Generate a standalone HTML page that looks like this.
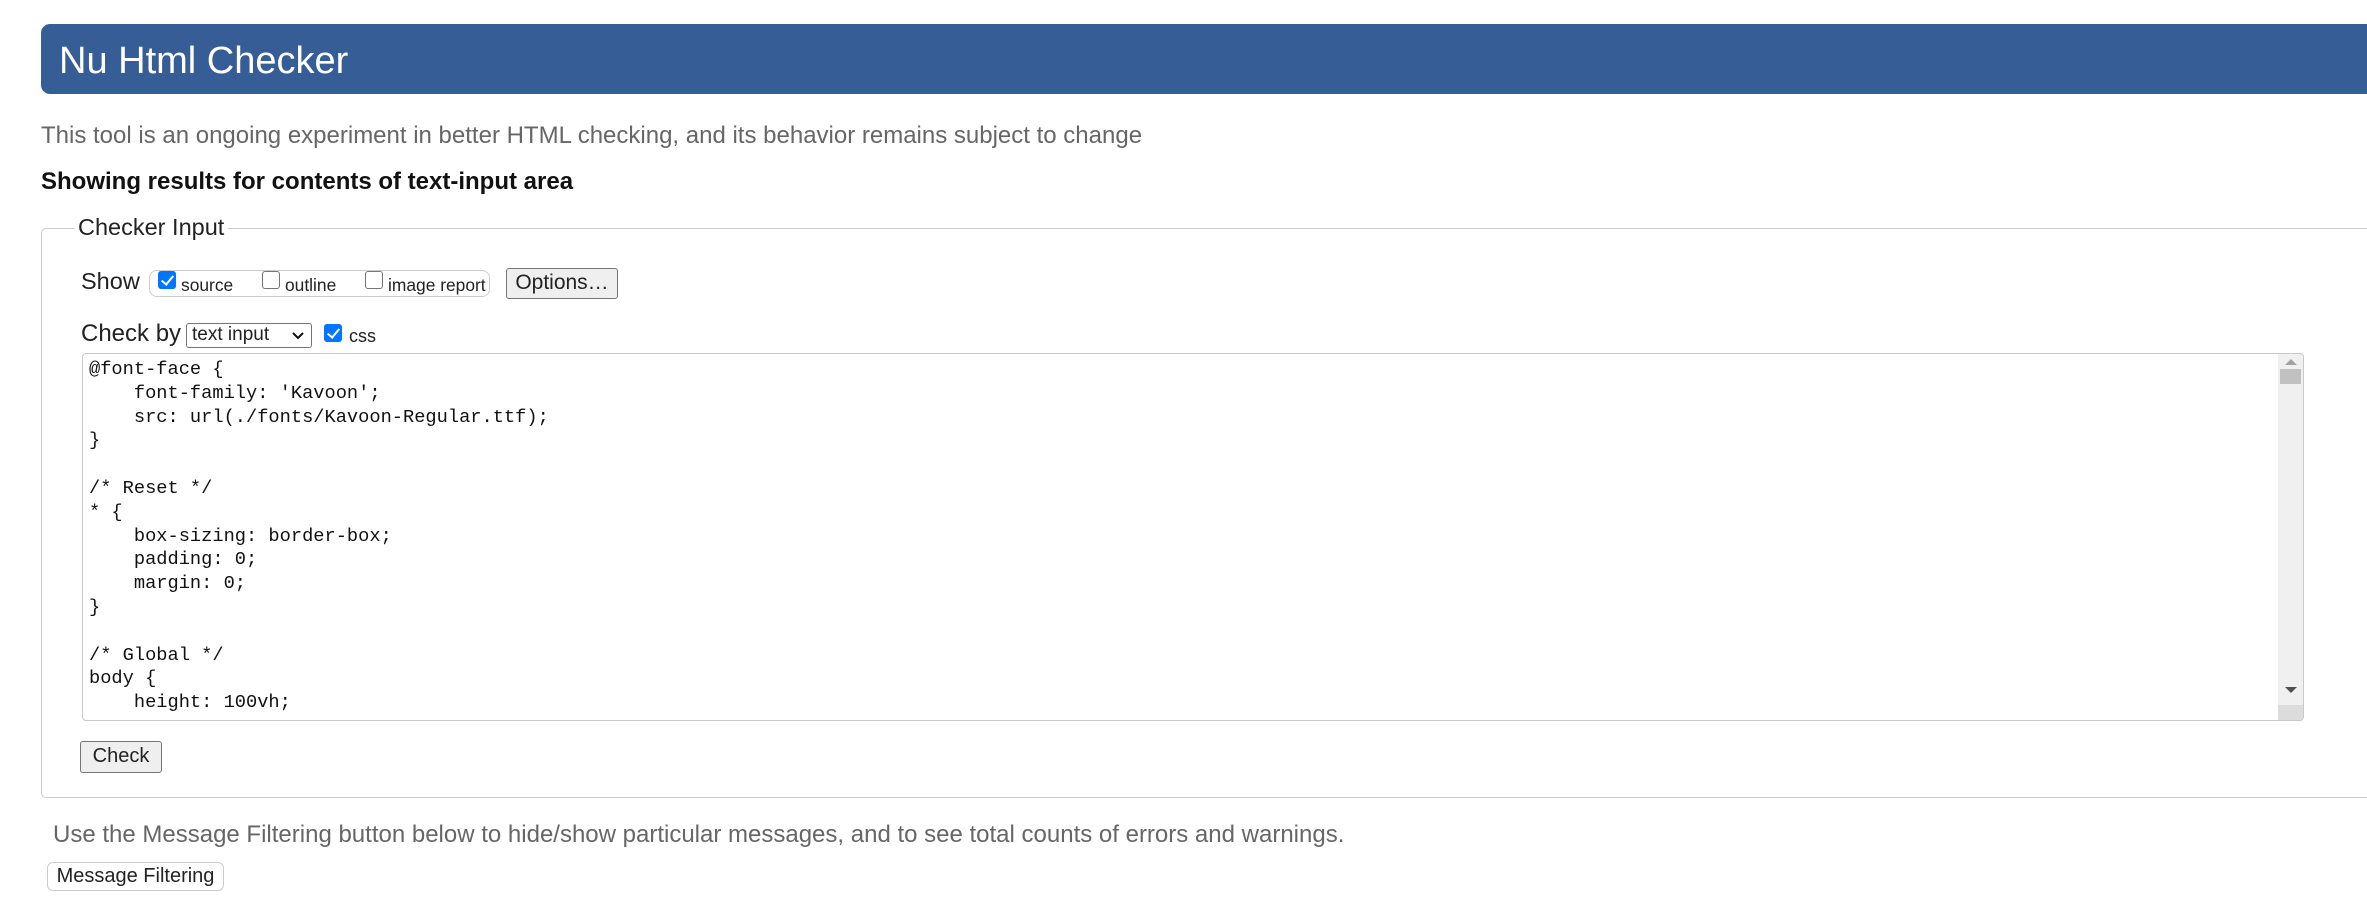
<!DOCTYPE html>
<html><head><meta charset="utf-8"><style>
*{box-sizing:border-box;margin:0;padding:0}
body{width:2367px;height:906px;background:#fff;font-family:"Liberation Sans",Arial,sans-serif;color:#222;position:relative;overflow:hidden}
.a{position:absolute;white-space:nowrap}
.hdr{left:41px;top:24px;width:2400px;height:70px;background:#365d95;border-radius:9px 0 0 9px}
.hdr span{position:absolute;left:18px;top:16px;color:#fff;font-size:38px}
.cb{position:absolute;width:18px;height:18px;border:1.5px solid #767676;border-radius:3px;background:#fff}
.cb.on{background:#0075ff;border-color:#0075ff}
.cb.on:after{content:"";position:absolute;left:5px;top:1px;width:5px;height:10px;border:solid #fff;border-width:0 2.5px 2.5px 0;transform:rotate(40deg)}
.btn{position:absolute;background:#efefef;border:1.5px solid #767676;border-radius:3px;font-size:20px;text-align:center}
pre{font-family:"Liberation Mono",monospace;font-size:18.7px;line-height:23.8px;color:#111}
</style></head><body>
<div class="a hdr"><span>Nu Html Checker</span></div>
<div class="a" style="left:41px;top:122px;font-size:24px;color:#666">This tool is an ongoing experiment in better HTML checking, and its behavior remains subject to change</div>
<div class="a" style="left:41px;top:168px;font-size:24px;font-weight:bold;color:#111">Showing results for contents of text-input area</div>
<div class="a" style="left:41px;top:228px;width:2400px;height:570px;border:1.5px solid #ccc;border-radius:5px"></div>
<div class="a" style="left:74px;top:214px;font-size:23.5px;background:#fff;padding:0 4px">Checker Input</div>
<div class="a" style="left:81px;top:268px;font-size:23.5px">Show</div>
<div class="a" style="left:149px;top:270px;width:341px;height:27px;border:1.5px solid #ccc;border-radius:8px"></div>
<div class="cb on" style="left:158px;top:271px"></div>
<div class="a" style="left:181px;top:275px;font-size:17.4px">source</div>
<div class="cb" style="left:262px;top:271px"></div>
<div class="a" style="left:285px;top:275px;font-size:17.4px">outline</div>
<div class="cb" style="left:365px;top:271px"></div>
<div class="a" style="left:388px;top:275px;font-size:17.4px">image report</div>
<div class="btn" style="left:506px;top:268px;width:112px;height:31px;line-height:28px;font-size:21px">Options…</div>
<div class="a" style="left:81px;top:320px;font-size:24px">Check by</div>
<div class="a" style="left:186px;top:323px;width:126px;height:25px;border:1.5px solid #767676;border-radius:3px;font-size:19px;line-height:22px;padding-left:5px">text input</div>
<svg class="a" style="left:292px;top:331px" width="12" height="9"><path d="M1 2 L6 7 L11 2" fill="none" stroke="#111" stroke-width="2"/></svg>
<div class="cb on" style="left:324px;top:324px"></div>
<div class="a" style="left:349px;top:326px;font-size:18px">css</div>
<div class="a" style="left:82px;top:353px;width:2222px;height:368px;border:1.5px solid #c8c8c8;border-radius:4px;overflow:hidden">
<pre style="position:absolute;left:6px;top:4px">@font-face {
    font-family: 'Kavoon';
    src: url(./fonts/Kavoon-Regular.ttf);
}

/* Reset */
* {
    box-sizing: border-box;
    padding: 0;
    margin: 0;
}

/* Global */
body {
    height: 100vh;</pre>
<div style="position:absolute;right:0;top:0;width:25px;height:100%;background:#f0f0f0"></div>
<div style="position:absolute;right:2px;top:15px;width:21px;height:15px;background:#c1c1c1"></div>
<svg style="position:absolute;right:6px;top:5px" width="12" height="6"><path d="M0 6 L6 0 L12 6Z" fill="#a3a3a3"/></svg>
<svg style="position:absolute;right:6px;bottom:27px" width="12" height="6"><path d="M0 0 L6 6 L12 0Z" fill="#505050"/></svg>
<div style="position:absolute;right:0;bottom:0;width:25px;height:15px;background:#dcdcdc"></div>
</div>
<div class="btn" style="left:80px;top:741px;width:82px;height:32px;line-height:29px">Check</div>
<div class="a" style="left:53px;top:821px;font-size:24px;color:#666">Use the Message Filtering button below to hide/show particular messages, and to see total counts of errors and warnings.</div>
<div class="a" style="left:47px;top:862px;width:177px;height:29px;border:1.5px solid #ccc;border-radius:6px;font-size:20px;line-height:26px;text-align:center">Message Filtering</div>
</body></html>
